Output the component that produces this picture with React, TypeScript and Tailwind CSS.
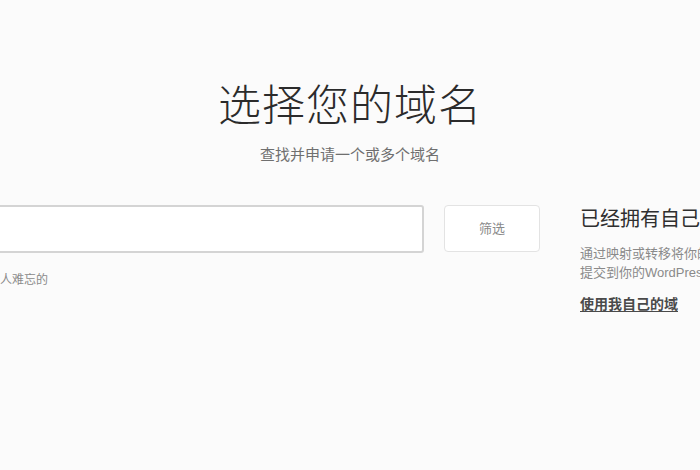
const App = () => {
    return (
        <div
            className="w-[700px] h-[470px] overflow-hidden bg-[#fbfbfb] text-[#333]"
            style={{ fontFamily: '"Liberation Sans", "Noto Sans CJK SC", sans-serif' }}
        >
            <div className="pt-[84px] flex flex-col items-center">
                <h1 className="text-[43px] leading-[44px] font-light text-[#2b2b2b] tracking-[1px]">
                    选择您的域名
                </h1>
                <p className="mt-[18px] text-[15px] leading-[18px] text-[#6f6f6f]">
                    查找并申请一个或多个域名
                </p>
            </div>

            <div className="mt-[41px] ml-[-60px] flex items-start">
                <div className="w-[484px] shrink-0">
                    <input
                        type="text"
                        className="block w-full h-[48px] bg-white border-2 border-[#d4d4d4] rounded-[3px] outline-none px-3 text-sm"
                    />
                    <p className="mt-[19px] text-[12px] leading-[16px] text-[#8a8a8a]">
                        输入一个令人难忘的
                    </p>
                </div>
                <button
                    type="button"
                    className="ml-[20px] w-[96px] h-[47px] shrink-0 bg-white border border-[#e3e3e3] rounded-[4px] text-[13px] text-[#8a8a8a]"
                >
                    筛选
                </button>
                <div className="ml-[40px] w-[240px] shrink-0 pt-[2px]">
                    <h2 className="text-[20px] leading-[24px] text-[#2f2f2f] whitespace-nowrap">
                        已经拥有自己的域名了吗？
                    </h2>
                    <p className="mt-[13px] text-[13px] leading-[19px] text-[#8a8a8a] whitespace-nowrap">
                        通过映射或转移将你的域名
                        <br />
                        提交到你的WordPress.com站点。
                    </p>
                    <a
                        href="#"
                        className="inline-block mt-[13px] text-[14px] leading-[18px] font-bold text-[#4a4a4a] underline underline-offset-2"
                    >
                        使用我自己的域
                    </a>
                </div>
            </div>
        </div>
    )
}

export default App
